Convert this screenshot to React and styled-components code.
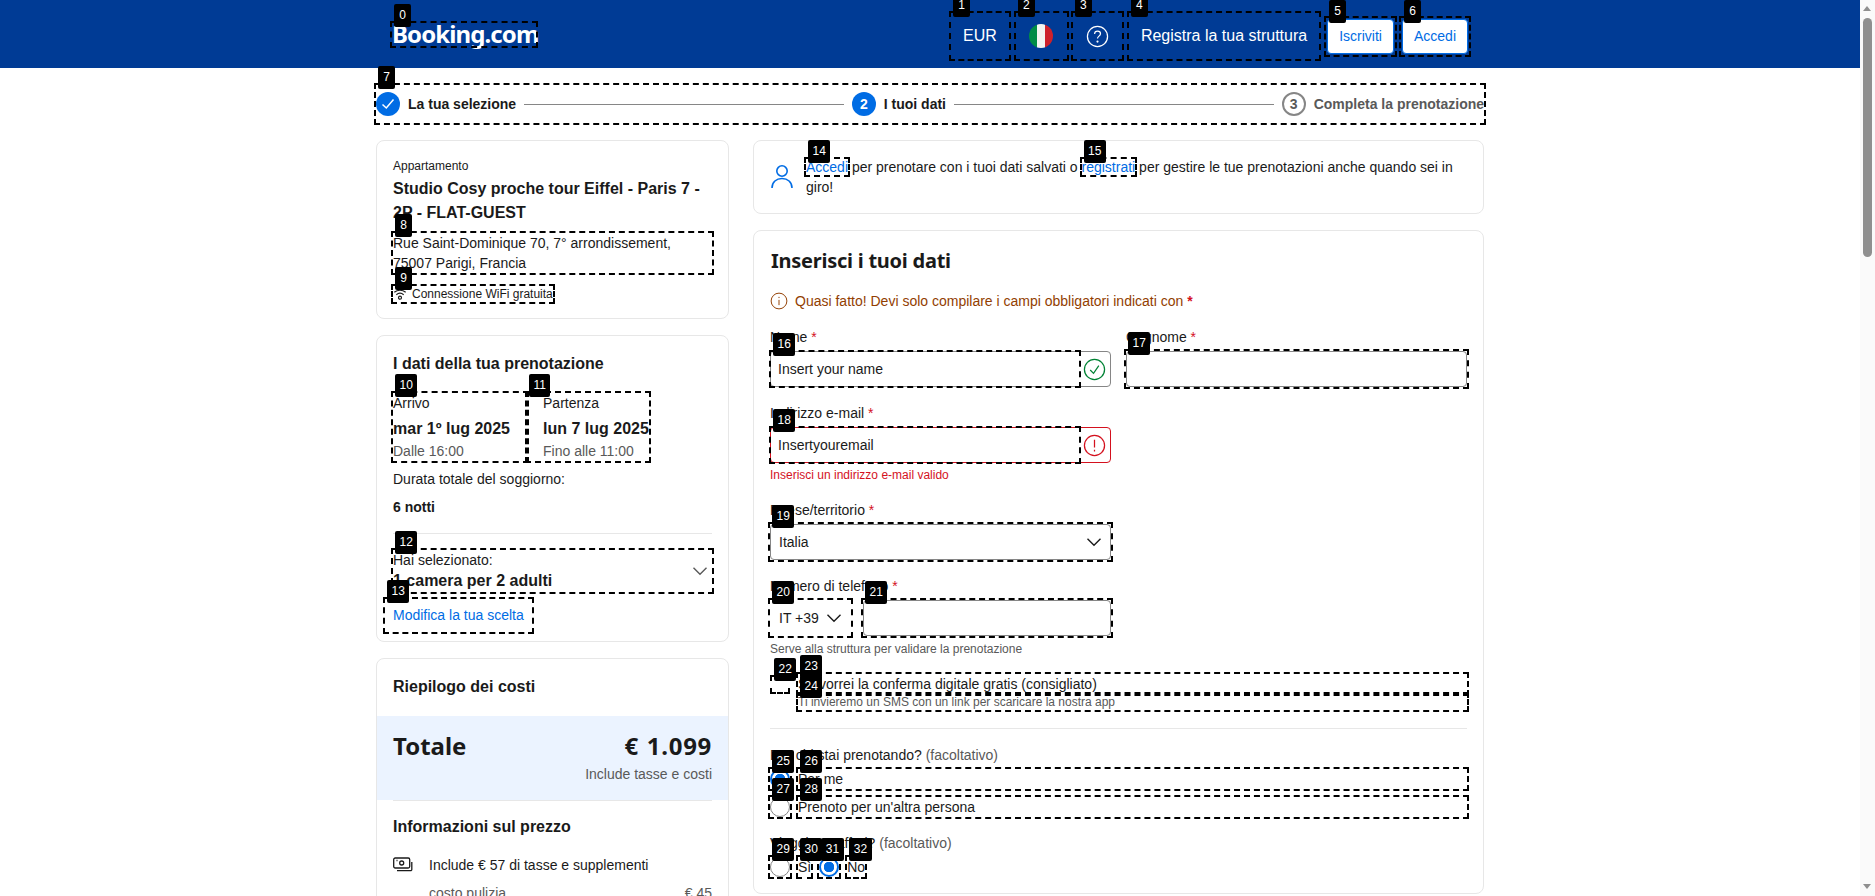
import React from "react";
import styled, { createGlobalStyle } from "styled-components";

const GlobalStyle = createGlobalStyle`
  html, body { margin: 0; padding: 0; background: #fff; }
  body {
    font-family: "Liberation Sans", Arial, sans-serif;
    font-size: 14px;
    line-height: 20px;
    color: #1a1a1a;
  }
  * { box-sizing: border-box; }
`;

const Page = styled.div`
  min-height: 3240px;
  padding-right: 15px;
`;

/* the window scrollbar of the screenshot */
const ScrollTrack = styled.div`
  position: fixed;
  top: 0;
  right: 0;
  bottom: 0;
  width: 15px;
  background: #fafafa;
  z-index: 10;
`;

const ScrollThumb = styled.div`
  position: absolute;
  top: 18px;
  left: 3px;
  width: 9px;
  height: 239px;
  border-radius: 5px;
  background: #8f8f8f;
`;

const ScrollArrow = styled.span`
  position: absolute;
  left: 3px;
  ${(p) => (p.$down ? "bottom: 7px;" : "top: 6px;")}
  border-left: 4.5px solid transparent;
  border-right: 4.5px solid transparent;
  ${(p) => (p.$down ? "border-top: 5px solid #8f8f8f;" : "border-bottom: 5px solid #8f8f8f;")}
`;

/* numbered dashed marker round an element */
const MarkBox = styled.div`
  position: relative;
  display: ${(p) => (p.$inline ? "inline" : "block")};
  outline: 2px dashed #000;
  outline-offset: ${(p) => p.$offset ?? 0}px;
`;

const Badge = styled.span`
  position: absolute;
  left: 2px;
  top: -19px;
  z-index: 5;
  height: 23px;
  min-width: 17px;
  padding: 0 4.5px;
  border-radius: 2px;
  background: #000;
  color: #fff;
  font: 400 12px/23px "Liberation Sans", sans-serif;
  text-align: center;
`;

const Mark = ({ n, children, inline, offset, className }) => (
  <MarkBox as={inline ? "span" : undefined} $inline={inline} $offset={offset} className={className}>
    <Badge>{n}</Badge>
    {children}
  </MarkBox>
);

/* header */
const Header = styled.header`
  height: 68px;
  background: #003b95;
`;

const Inner = styled.div`
  width: 1108px;
  margin: 0 auto;
`;

const HeaderRow = styled(Inner)`
  height: 68px;
  padding: 4px 16px 0;
  display: flex;
  align-items: center;
  justify-content: space-between;
`;

const LogoMark = styled(Mark)`
  margin-top: -3px;
`;

const Logo = styled.div`
  font-family: "Noto Sans", sans-serif;
  font-weight: 700;
  font-size: 24px;
  line-height: 22px;
  padding-bottom: 1px;
  letter-spacing: -0.9px;
  color: #fff;
  width: 144px;
  white-space: nowrap;
`;

const HeaderNav = styled.nav`
  display: flex;
  align-items: center;
  gap: 6px;
`;

const NavMark = styled(Mark)`
  margin-left: ${(p) => p.$left ?? 0}px;
`;

const NavItem = styled.div`
  height: 46px;
  padding: 0 ${(p) => p.$pad ?? 12}px;
  display: flex;
  align-items: center;
  color: #fff;
  font-size: 16px;
`;

const NavButton = styled.button`
  display: block;
  height: 35px;
  padding: 0 11px;
  border: 1px solid #006ce4;
  border-radius: 4px;
  background: #fff;
  color: #006ce4;
  font: 400 14px/20px "Liberation Sans", sans-serif;
`;

const Flag = styled.span`
  width: 24px;
  height: 24px;
  border-radius: 50%;
  background: linear-gradient(90deg, #008c45 0 33.3%, #f4f5f0 33.3% 66.6%, #cd212a 66.6%);
`;

/* stepper */
const StepperWrap = styled(Inner)`
  margin-top: 17px;
`;

const Stepper = styled.div`
  height: 38px;
  display: flex;
  align-items: center;
`;

const StepCircle = styled.span`
  flex: none;
  width: 24px;
  height: 24px;
  border-radius: 50%;
  display: flex;
  align-items: center;
  justify-content: center;
  font-weight: 700;
  font-size: 14px;
  color: ${(p) => (p.$done ? "#fff" : "#595959")};
  background: ${(p) => (p.$done ? "#006ce4" : "#fff")};
  border: ${(p) => (p.$done ? "none" : "2px solid #868686")};
`;

const StepLabel = styled.span`
  flex: none;
  margin-left: 8px;
  font-weight: 700;
  color: ${(p) => (p.$muted ? "#595959" : "#1a1a1a")};
`;

const StepLine = styled.span`
  flex: 1;
  height: 1px;
  margin: 0 8px;
  background: #868686;
`;

/* columns */
const Columns = styled(Inner)`
  margin-top: 17px;
  display: grid;
  grid-template-columns: 353px 731px;
  column-gap: 24px;
  align-items: start;
`;

const Column = styled.div`
  display: flex;
  flex-direction: column;
  gap: ${(p) => p.$gap}px;
`;

const Card = styled.section`
  border: 1px solid #e7e7e7;
  border-radius: 8px;
  background: #fff;
  padding: 16px;
`;

const Small = styled.div`
  font-size: 12px;
  line-height: 16px;
  margin-top: ${(p) => p.$top ?? 0}px;
  color: ${(p) => p.$color ?? "#1a1a1a"};
  white-space: nowrap;
`;

const Title = styled.h3`
  margin: ${(p) => p.$top ?? 0}px 0 0;
  font-size: 16px;
  line-height: 24px;
  font-weight: 700;
`;

const AddressMark = styled(Mark)`
  margin-top: 8px;
`;

const Address = styled.div`
  line-height: 20px;
`;

const PerkMark = styled(Mark)`
  margin-top: 13px;
  width: fit-content;
`;

const Perk = styled.div`
  display: flex;
  align-items: center;
  gap: 5px;
  font-size: 12px;
  line-height: 16px;
  white-space: nowrap;
`;

const StayRow = styled.div`
  display: flex;
  margin-top: 17px;
`;

const StayCol = styled.div`
  padding: ${(p) => (p.$right ? "0 0 0 16px" : "0 17px 0 0")};
  white-space: nowrap;
`;

const DateText = styled.div`
  margin-top: 4px;
  font-size: 16px;
  line-height: 24px;
  font-weight: 700;
`;

const Muted = styled.div`
  color: #595959;
  white-space: nowrap;
`;

const Para = styled.div`
  margin-top: ${(p) => p.$top ?? 0}px;
  font-weight: ${(p) => (p.$bold ? 700 : 400)};
`;

const Divider = styled.hr`
  margin: ${(p) => p.$top ?? 0}px 0 ${(p) => p.$bottom ?? 0}px;
  border: 0;
  height: 1px;
  background: #e7e7e7;
`;

const Selection = styled.div`
  display: flex;
  align-items: center;
  justify-content: space-between;
  height: 42px;
  padding-right: 4px;
`;

const SelectionBold = styled.div`
  font-size: 16px;
  line-height: 22px;
  font-weight: 700;
`;

const TextLink = styled.a`
  color: #006ce4;
`;

const ChangeLink = styled(Mark)`
  width: fit-content;
  margin: 7px 0 -7px -8px;
  padding: 6px 8px;
  height: 33px;
  color: #006ce4;
`;

const CostBand = styled.div`
  margin: 17px -16px 0;
  padding: 16px;
  background: #ebf3ff;
`;

const TotalRow = styled.div`
  display: flex;
  justify-content: space-between;
  margin: -2px 0 2px;
  font-family: "Noto Sans", sans-serif;
  font-size: 24px;
  line-height: 32px;
  font-weight: 700;
`;

const Price = styled.span`
  letter-spacing: 0.7px;
  word-spacing: 1px;
`;

const Right = styled.div`
  text-align: right;
  color: #595959;
`;

const InfoRow = styled.div`
  display: flex;
  align-items: center;
  gap: 16px;
  margin-top: 16px;
`;

const CostRow = styled.div`
  display: flex;
  justify-content: space-between;
  margin: 8px 0 0 36px;
  color: #595959;
`;

/* login hint */
const LoginRow = styled.div`
  display: flex;
  gap: 12px;
  align-items: center;
`;

/* form */
const FormTitle = styled.h2`
  margin: 0 0 0 1px;
  font-family: "Noto Sans", sans-serif;
  font-size: 20px;
  line-height: 28px;
  font-weight: 700;
  letter-spacing: -0.25px;
`;

const Notice = styled.div`
  display: flex;
  align-items: center;
  gap: 7px;
  margin-top: 16px;
  color: #923e01;
  b { color: #d4111e; }
`;

const TwoCols = styled.div`
  display: grid;
  grid-template-columns: 341px 341px;
  column-gap: 15px;
  margin-top: ${(p) => p.$top ?? 16}px;
`;

const Label = styled.label`
  display: block;
  height: 20px;
  margin-bottom: 4px;
  white-space: nowrap;
  i {
    font-style: normal;
    color: #d4111e;
  }
`;

const InputShell = styled.div`
  display: flex;
  width: ${(p) => p.$width ?? "341px"};
  height: 36px;
  border-radius: 4px;
  border: 1px solid ${(p) => (p.$error ? "#d4111e" : "#868686")};
  background: #fff;
`;

const ShellMark = styled(Mark)`
  flex: 1;
`;

const Input = styled.input`
  display: block;
  width: 100%;
  height: 34px;
  padding: 0 7px 1px;
  border: 0;
  outline: 0;
  background: transparent;
  color: #1a1a1a;
  font: 400 14px/20px "Liberation Sans", sans-serif;
`;

const IconZone = styled.div`
  flex: none;
  width: 31px;
  display: flex;
  align-items: center;
  justify-content: center;
`;

const Select = styled.div`
  display: flex;
  align-items: center;
  justify-content: space-between;
  height: 36px;
  padding: 0 8px;
  border-radius: 4px;
  border: 1px solid ${(p) => (p.$bare ? "transparent" : "#868686")};
  background: #fff;
`;

const PhoneRow = styled.div`
  display: grid;
  grid-template-columns: 81px 248px;
  column-gap: 12px;
  width: 341px;
`;

const CheckMark = styled(Mark)`
  width: 16px;
  height: 15px;
  margin: 3px 0 0 2px;
`;

const Check = styled.input`
  appearance: none;
  display: block;
  margin: 0;
  width: 16px;
  height: 15px;
  background: #fff;
`;

const ChoiceGrid = styled.div`
  display: grid;
  grid-template-columns: 20px 1fr;
  column-gap: 8px;
  row-gap: ${(p) => p.$gap ?? 0}px;
  margin-top: ${(p) => p.$top ?? 0}px;
`;

const Radio = styled.input`
  appearance: none;
  display: block;
  margin: 0;
  width: 20px;
  height: 20px;
  border-radius: 50%;
  border: 1px solid #868686;
  background: #fff;
  &:checked {
    border: 2px solid #006ce4;
    background: radial-gradient(circle, #006ce4 0 5px, #fff 5.5px);
  }
`;

const InlineChoices = styled.div`
  display: flex;
  gap: 8px;
  margin-top: 4px;
`;

const Head = styled.div`
  margin-top: ${(p) => p.$top}px;
  em {
    font-style: normal;
    color: #595959;
  }
`;

const Chevron = ({ size = 16, color = "#1a1a1a" }) => (
  <svg width={size} height={size} viewBox="0 0 16 16" fill="none">
    <path d="M1.5 4.8 8 11.3l6.5-6.5" stroke={color} strokeWidth="1.4" />
  </svg>
);

const CircleIcon = ({ color, size = 22, children }) => (
  <svg width={size} height={size} viewBox="0 0 24 24" fill="none" stroke={color} strokeWidth="1.3">
    <circle cx="12" cy="12" r="10.5" />
    {children}
  </svg>
);

const UserIcon = () => (
  <svg width="24" height="28" viewBox="0 0 24 28" fill="none" stroke="#006ce4" strokeWidth="1.6" style={{ flex: "none" }}>
    <circle cx="12" cy="8" r="5.2" />
    <path d="M2 25c0-6 4.4-9.5 10-9.5S22 19 22 25" />
  </svg>
);

const WifiIcon = () => (
  <svg width="14" height="14" viewBox="0 0 16 16" fill="none" stroke="#1a1a1a" strokeWidth="1.3">
    <path d="M1.5 6c3.6-3 9.4-3 13 0M3.8 8.8c2.4-2 6-2 8.4 0" />
    <circle cx="8" cy="12.2" r="1.7" />
  </svg>
);

const MoneyIcon = () => (
  <svg width="20" height="16" viewBox="0 0 20 16" fill="none" stroke="#1a1a1a" strokeWidth="1.3" style={{ flex: "none" }}>
    <rect x="0.7" y="1" width="16" height="10" rx="1.5" />
    <circle cx="8.7" cy="6" r="2" />
    <path d="M3.5 3.5h1M18.8 5v7.5a1.2 1.2 0 0 1-1.2 1.2H4" />
  </svg>
);

export default function App() {
  return (
    <Page>
      <GlobalStyle />
      <ScrollTrack>
        <ScrollArrow />
        <ScrollThumb />
        <ScrollArrow $down />
      </ScrollTrack>

      <Header>
        <HeaderRow>
          <LogoMark n={0}>
            <Logo>Booking.com</Logo>
          </LogoMark>
          <HeaderNav>
            <NavMark n={1}>
              <NavItem>EUR</NavItem>
            </NavMark>
            <NavMark n={2} $left={1}>
              <NavItem $pad={13.5}>
                <Flag />
              </NavItem>
            </NavMark>
            <NavMark n={3}>
              <NavItem $pad={13}>
                <CircleIcon color="#fff" size={23}>
                  <path d="M9 9.3c0-1.8 1.4-3 3.1-3s3 1.2 3 2.8c0 2.5-3.1 2.5-3.1 5" />
                  <circle cx="12" cy="17.3" r=".5" fill="#fff" />
                </CircleIcon>
              </NavItem>
            </NavMark>
            <NavMark n={4} $left={1}>
              <NavItem>Registra la tua struttura</NavItem>
            </NavMark>
            <NavMark n={5} offset={1} $left={2}>
              <NavButton>Iscriviti</NavButton>
            </NavMark>
            <NavMark n={6} offset={1} $left={2}>
              <NavButton>Accedi</NavButton>
            </NavMark>
          </HeaderNav>
        </HeaderRow>
      </Header>

      <StepperWrap>
        <Mark n={7}>
          <Stepper>
            <StepCircle $done>
              <svg width="14" height="14" viewBox="0 0 14 14" fill="none" stroke="#fff" strokeWidth="1.5">
                <path d="M1.5 7.5 5.3 11l7.2-8.5" />
              </svg>
            </StepCircle>
            <StepLabel>La tua selezione</StepLabel>
            <StepLine />
            <StepCircle $done>2</StepCircle>
            <StepLabel>I tuoi dati</StepLabel>
            <StepLine />
            <StepCircle>3</StepCircle>
            <StepLabel $muted>Completa la prenotazione</StepLabel>
          </Stepper>
        </Mark>
      </StepperWrap>

      <Columns>
        <Column $gap={16}>
          <Card>
            <Small $top={1}>Appartamento</Small>
            <Title $top={3}>Studio Cosy proche tour Eiffel - Paris 7 - 2P - FLAT-GUEST</Title>
            <AddressMark n={8}>
              <Address>Rue Saint-Dominique 70, 7° arrondissement, 75007 Parigi, Francia</Address>
            </AddressMark>
            <PerkMark n={9}>
              <Perk>
                <WifiIcon />
                Connessione WiFi gratuita
              </Perk>
            </PerkMark>
          </Card>

          <Card>
            <Title>I dati della tua prenotazione</Title>
            <StayRow>
              <Mark n={10}>
                <StayCol>
                  <div>Arrivo</div>
                  <DateText>mar 1º lug 2025</DateText>
                  <Muted>Dalle 16:00</Muted>
                </StayCol>
              </Mark>
              <Mark n={11}>
                <StayCol $right>
                  <div>Partenza</div>
                  <DateText>lun 7 lug 2025</DateText>
                  <Muted>Fino alle 11:00</Muted>
                </StayCol>
              </Mark>
            </StayRow>
            <Para $top={8}>Durata totale del soggiorno:</Para>
            <Para $top={8} $bold>
              6 notti
            </Para>
            <Divider $top={16} $bottom={16} />
            <Mark n={12}>
              <Selection>
                <div>
                  <div>Hai selezionato:</div>
                  <SelectionBold>1 camera per 2 adulti</SelectionBold>
                </div>
                <Chevron color="#595959" />
              </Selection>
            </Mark>
            <ChangeLink n={13}>Modifica la tua scelta</ChangeLink>
          </Card>

          <Card>
            <Title>Riepilogo dei costi</Title>
            <CostBand>
              <TotalRow>
                <span>Totale</span>
                <Price>€ 1.099</Price>
              </TotalRow>
              <Right>Include tasse e costi</Right>
            </CostBand>
            <Divider />
            <Title $top={14}>Informazioni sul prezzo</Title>
            <InfoRow>
              <MoneyIcon />
              Include € 57 di tasse e supplementi
            </InfoRow>
            <CostRow>
              <span>costo pulizia</span>
              <span>€ 45</span>
            </CostRow>
          </Card>
        </Column>

        <Column $gap={16}>
          <Card>
            <LoginRow>
              <UserIcon />
              <div>
                <Mark n={14} inline>
                  <TextLink>Accedi</TextLink>
                </Mark>{" "}
                per prenotare con i tuoi dati salvati o{" "}
                <Mark n={15} inline>
                  <TextLink>registrati</TextLink>
                </Mark>{" "}
                per gestire le tue prenotazioni anche quando sei in giro!
              </div>
            </LoginRow>
          </Card>

          <Card>
            <FormTitle>Inserisci i tuoi dati</FormTitle>
            <Notice>
              <CircleIcon color="#923e01" size={18}>
                <path d="M12 10.5v7M12 6.5v1.6" />
              </CircleIcon>
              <span>
                Quasi fatto! Devi solo compilare i campi obbligatori indicati con <b>*</b>
              </span>
            </Notice>

            <TwoCols>
              <div>
                <Label>
                  Nome <i>*</i>
                </Label>
                <InputShell>
                  <ShellMark n={16}>
                    <Input readOnly value="Insert your name" />
                  </ShellMark>
                  <IconZone>
                    <CircleIcon color="#008234" size={23}>
                      <path d="M7.5 12.5 11 16l5.5-8" />
                    </CircleIcon>
                  </IconZone>
                </InputShell>
              </div>
              <div>
                <Label>
                  Cognome <i>*</i>
                </Label>
                <Mark n={17}>
                  <InputShell>
                    <Input readOnly value="" />
                  </InputShell>
                </Mark>
              </div>
            </TwoCols>

            <TwoCols>
              <div>
                <Label>
                  Indirizzo e-mail <i>*</i>
                </Label>
                <InputShell $error>
                  <ShellMark n={18}>
                    <Input readOnly value="Insertyouremail" />
                  </ShellMark>
                  <IconZone>
                    <CircleIcon color="#d4111e" size={23}>
                      <path d="M12 6v8M12 16.5v1.8" />
                    </CircleIcon>
                  </IconZone>
                </InputShell>
                <Small $color="#d4111e" $top={4}>
                  Inserisci un indirizzo e-mail valido
                </Small>
              </div>
            </TwoCols>

            <TwoCols $top={17}>
              <div>
                <Label>
                  Paese/territorio <i>*</i>
                </Label>
                <Mark n={19}>
                  <Select>
                    Italia
                    <Chevron />
                  </Select>
                </Mark>
              </div>
            </TwoCols>

            <TwoCols>
              <div>
                <Label>
                  Numero di telefono <i>*</i>
                </Label>
                <PhoneRow>
                  <Mark n={20}>
                    <Select $bare>
                      IT +39
                      <Chevron />
                    </Select>
                  </Mark>
                  <Mark n={21}>
                    <InputShell $width="100%">
                      <Input readOnly value="" />
                    </InputShell>
                  </Mark>
                </PhoneRow>
                <Small $color="#595959" $top={5}>
                  Serve alla struttura per validare la prenotazione
                </Small>
              </div>
            </TwoCols>

            <ChoiceGrid $top={17}>
              <CheckMark n={22}>
                <Check type="checkbox" readOnly />
              </CheckMark>
              <Mark n={23}>Sì, vorrei la conferma digitale gratis (consigliato)</Mark>
              <span />
              <Mark n={24}>
                <Small $color="#595959">Ti invieremo un SMS con un link per scaricare la nostra app</Small>
              </Mark>
            </ChoiceGrid>

            <Divider $top={18} />

            <Head $top={16}>
              Per chi stai prenotando? <em>(facoltativo)</em>
            </Head>
            <ChoiceGrid $top={4} $gap={8}>
              <Mark n={25}>
                <Radio type="radio" name="who" defaultChecked />
              </Mark>
              <Mark n={26}>Per me</Mark>
              <Mark n={27}>
                <Radio type="radio" name="who" />
              </Mark>
              <Mark n={28}>Prenoto per un'altra persona</Mark>
            </ChoiceGrid>

            <Head $top={16}>
              Viaggi per affari? <em>(facoltativo)</em>
            </Head>
            <InlineChoices>
              <Mark n={29}>
                <Radio type="radio" name="biz" />
              </Mark>
              <Mark n={30}>Sì</Mark>
              <Mark n={31}>
                <Radio type="radio" name="biz" defaultChecked />
              </Mark>
              <Mark n={32}>No</Mark>
            </InlineChoices>
          </Card>
        </Column>
      </Columns>
    </Page>
  );
}
